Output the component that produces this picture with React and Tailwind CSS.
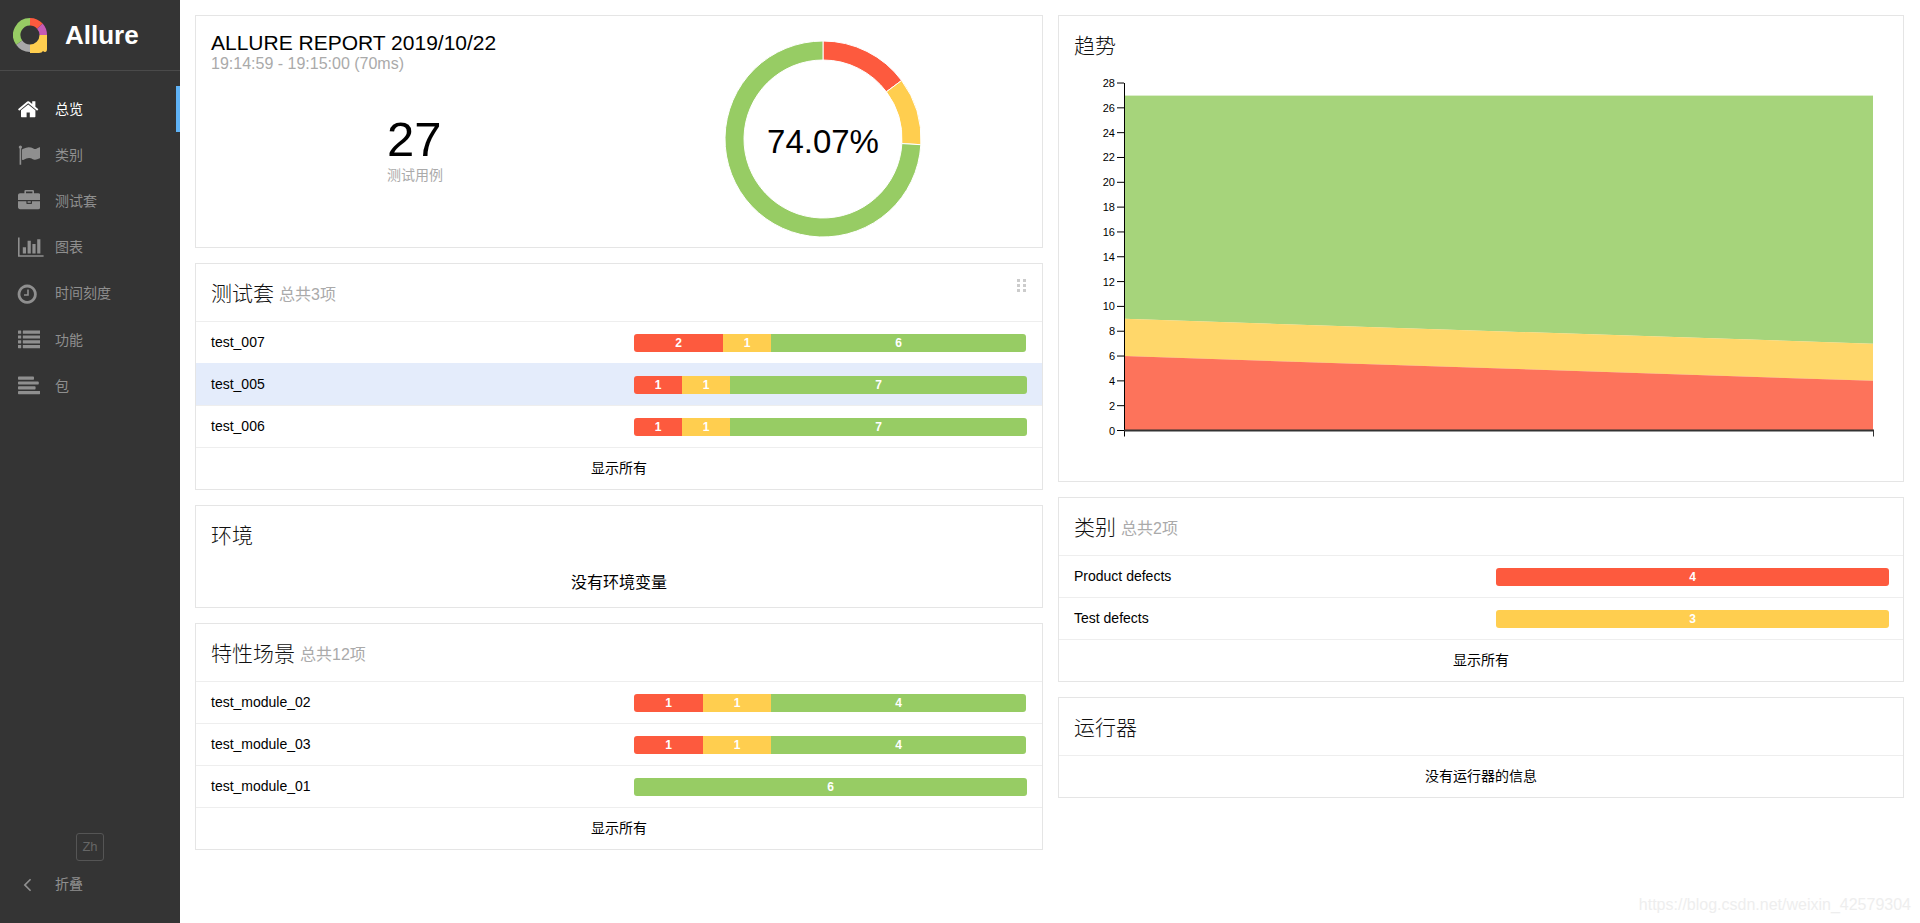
import React from "react";

const RED = "#fd5a3e";
const YELLOW = "#ffce4f";
const GREEN = "#97cc64";

// sidebar glyphs, 80 units to the pixel
const glyphs = {
  home: [1792, "M1472 992v480q0 26-19 45t-45 19h-384v-384h-256v384h-384q-26 0-45-19t-19-45v-480q0-1 .5-3t.5-3l575-474 575 474q1 2 1 6zm223-69l-62 74q-8 9-21 11h-3q-13 0-21-7l-692-577-692 577q-12 8-24 7-13-2-21-11l-62-74q-8-10-7-23.5t11-21.5l719-599q32-26 76-26t76 26l244 204v-195q0-14 9-23t23-9h192q14 0 23 9t9 23v408l219 182q10 8 11 21.5t-7 23.5z"],
  flag: [1792, "M320 256q0 72-64 109v1267q0 13-9.5 22.5t-22.5 9.5h-64q-13 0-22.5-9.5t-9.5-22.5v-1267q-64-37-64-109 0-53 37.5-90.5t90.5-37.5 90.5 37.5 37.5 90.5zm1472 64v763q0 25-12.5 38.5t-39.5 27.5q-215 116-369 116-61 0-123.5-22t-108.5-48-115.5-48-142.5-22q-192 0-464 146-17 9-33 9-26 0-45-19t-19-45v-742q0-32 31-55 21-14 79-43 236-120 421-120 107 0 200 29t219 88q38 19 88 19 54 0 117.5-21t110-47 88-47 54.5-21q26 0 45 19t19 45z"],
  briefcase: [1792, "M640 256h512v-128h-512v128zm1152 640v480q0 66-47 113t-113 47h-1472q-66 0-113-47t-47-113v-480h672v160q0 26 19 45t45 19h320q26 0 45-19t19-45v-160h672zm-768 0v128h-256v-128h256zm768-480v384h-1792v-384q0-66 47-113t113-47h352v-160q0-40 28-68t68-28h576q40 0 68 28t28 68v160h352q66 0 113 47t47 113z"],
  chart: [2048, "M640 896v512h-256v-512h256zm384-512v1024h-256v-1024h256zm1024 1152v128h-2048v-1536h128v1408h1920zm-640-896v768h-256v-768h256zm384-384v1152h-256v-1152h256z"],
  clock: [1792, "M1024 544v448q0 14-9 23t-23 9h-320q-14 0-23-9t-9-23v-64q0-14 9-23t23-9h224v-352q0-14 9-23t23-9h64q14 0 23 9t9 23zm416 352q0-148-73-273t-198-198-273-73-273 73-198 198-73 273 73 273 198 198 273 73 273-73 198-198 73-273zm224 0q0 209-103 385.5t-279.5 279.5-385.5 103-385.5-103-279.5-279.5-103-385.5 103-385.5 279.5-279.5 385.5-103 385.5 103 279.5 279.5 103 385.5z"],
  list: [1792, "M256 1312v192q0 14-9 23t-23 9h-192q-14 0-23-9t-9-23v-192q0-14 9-23t23-9h192q14 0 23 9t9 23zm0-384v192q0 14-9 23t-23 9h-192q-14 0-23-9t-9-23v-192q0-14 9-23t23-9h192q14 0 23 9t9 23zm0-384v192q0 14-9 23t-23 9h-192q-14 0-23-9t-9-23v-192q0-14 9-23t23-9h192q14 0 23 9t9 23zm1536 768v192q0 14-9 23t-23 9h-1344q-14 0-23-9t-9-23v-192q0-14 9-23t23-9h1344q14 0 23 9t9 23zm-1536-1152v192q0 14-9 23t-23 9h-192q-14 0-23-9t-9-23v-192q0-14 9-23t23-9h192q14 0 23 9t9 23zm1536 768v192q0 14-9 23t-23 9h-1344q-14 0-23-9t-9-23v-192q0-14 9-23t23-9h1344q14 0 23 9t9 23zm0-384v192q0 14-9 23t-23 9h-1344q-14 0-23-9t-9-23v-192q0-14 9-23t23-9h1344q14 0 23 9t9 23zm0-384v192q0 14-9 23t-23 9h-1344q-14 0-23-9t-9-23v-192q0-14 9-23t23-9h1344q14 0 23 9t9 23z"],
  align: [1792, "M1792 1344v128q0 26-19 45t-45 19h-1664q-26 0-45-19t-19-45v-128q0-26 19-45t45-19h1664q26 0 45 19t19 45zm-384-384v128q0 26-19 45t-45 19h-1280q-26 0-45-19t-19-45v-128q0-26 19-45t45-19h1280q26 0 45 19t19 45zm256-384v128q0 26-19 45t-45 19h-1536q-26 0-45-19t-19-45v-128q0-26 19-45t45-19h1536q26 0 45 19t19 45zm-384-384v128q0 26-19 45t-45 19h-1152q-26 0-45-19t-19-45v-128q0-26 19-45t45-19h1152q26 0 45 19t19 45z"],
  angle: [1792, "M1203 544q0 13-10 23l-393 393 393 393q10 10 10 23t-10 23l-50 50q-10 10-23 10t-23-10l-466-466q-10-10-10-23t10-23l466-466q10-10 23-10t23 10l50 50q10 10 10 23z"],
};

const Glyph = ({ name, className = "" }) => {
  const [w, d] = glyphs[name];
  return (
    <svg width={w / 80} height={22.4} viewBox={`0 0 ${w} 1792`} fill="currentColor" className={className}>
      <path d={d} />
    </svg>
  );
};

const navItems = [
  { label: "总览", icon: "home", iconClass: "-ml-[1px]", active: true },
  { label: "类别", icon: "flag" },
  { label: "测试套", icon: "briefcase" },
  { label: "图表", icon: "chart" },
  { label: "时间刻度", icon: "clock", iconClass: "-ml-[2px]" },
  { label: "功能", icon: "list" },
  { label: "包", icon: "align" },
];

const suites = [
  { name: "test_007", segs: [[RED, 2, 89], [YELLOW, 1, 48], [GREEN, 6, 255]] },
  { name: "test_005", segs: [[RED, 1, 48], [YELLOW, 1, 48], [GREEN, 7, 297]], active: true },
  { name: "test_006", segs: [[RED, 1, 48], [YELLOW, 1, 48], [GREEN, 7, 297]] },
];

const features = [
  { name: "test_module_02", segs: [[RED, 1, 69], [YELLOW, 1, 68], [GREEN, 4, 255]] },
  { name: "test_module_03", segs: [[RED, 1, 69], [YELLOW, 1, 68], [GREEN, 4, 255]] },
  { name: "test_module_01", segs: [[GREEN, 6, 393]] },
];

const categories = [
  { name: "Product defects", segs: [[RED, 4, 393]], narrow: true },
  { name: "Test defects", segs: [[YELLOW, 3, 393]], narrow: true },
];

const Logo = () => {
  const arc = (from, to, color) => {
    const p = (deg) => {
      const a = ((deg - 90) * Math.PI) / 180;
      return `${17 + 13.25 * Math.cos(a)} ${17 + 13.25 * Math.sin(a)}`;
    };
    return (
      <path
        d={`M${p(from)}A13.25 13.25 0 ${to - from > 180 ? 1 : 0} 1 ${p(to)}`}
        stroke={color}
        strokeWidth="7.5"
        fill="none"
      />
    );
  };
  return (
    <svg width="34" height="35" viewBox="0 0 34 35" className="shrink-0">
      {arc(0, 48, RED)}
      {arc(48, 90, "#c65bb5")}
      {arc(180, 235, "#a8a8a8")}
      {arc(235, 360, GREEN)}
      <path d="M26.5 17H34V31q0 3-2 3-1 0-2-1-1 2-4 2H17V26.5A9.5 9.5 0 0 0 26.5 17Z" fill={YELLOW} />
    </svg>
  );
};

const Sidebar = () => (
  <aside className="w-[180px] shrink-0 h-[923px] bg-[#343434] flex flex-col">
    <div className="h-[71px] flex items-center pl-[13px] border-b border-[#4a4a4a]">
      <Logo />
      <span className="ml-[18px] text-[26px] font-bold text-white">Allure</span>
    </div>
    <nav className="pt-[15px]">
      {navItems.map(({ label, icon, iconClass, active }) => (
        <div
          key={label}
          className={`h-[46.2px] flex items-center pl-[18px] border-r-4 ${
            active ? "text-white border-[#5fb2f5]" : "text-[#8f8f8f] border-transparent"
          }`}
        >
          <span className="w-[37px] flex items-center">
            <Glyph name={icon} className={iconClass} />
          </span>
          <span className="text-[14px]">{label}</span>
        </div>
      ))}
    </nav>
    <div className="mt-auto pb-[27px]">
      <div className="ml-[76px] w-[28px] h-[28px] border border-[#555] rounded-[3px] flex items-center justify-center text-[13px] text-[#666]">
        Zh
      </div>
      <div className="mt-[11px] h-[24px] flex items-center pl-[16px] text-[#8f8f8f]">
        <span className="w-[39px] flex items-center">
          <Glyph name="angle" />
        </span>
        <span className="text-[14px]">折叠</span>
      </div>
    </div>
  </aside>
);

const CardHeader = ({ title, count }) => (
  <div className="h-[57px] flex items-center px-[15px] pt-[2px]">
    <h2 className="text-[21px] font-light text-[#111]">{title}</h2>
    {count && <span className="ml-[5px] mt-[2px] text-[16px] text-[#aaa]">{count}</span>}
  </div>
);

const StatusBar = ({ segs }) => (
  <div className="flex h-[18px] rounded-[3px] overflow-hidden text-[12px] font-bold text-white">
    {segs.map(([color, value, width], i) => (
      <div
        key={i}
        className="flex items-center justify-center"
        style={{ width, backgroundColor: color }}
      >
        {value}
      </div>
    ))}
  </div>
);

const Row = ({ item }) => (
  <div
    className={`h-[42px] flex items-center pl-[15px] text-[14px] text-black border-t ${
      item.active ? "bg-[#e4ecfb] border-[#e4ecfb]" : "border-[#eee]"
    }`}
  >
    <div className={item.narrow ? "w-[422px]" : "w-[423px]"}>{item.name}</div>
    <StatusBar segs={item.segs} />
  </div>
);

const ShowAll = () => (
  <div className="h-[42px] flex items-center justify-center text-[14px] text-black border-t border-[#eee]">
    显示所有
  </div>
);

const Card = ({ className = "", children }) => (
  <section className={`border border-[#e5e5e5] bg-white ${className}`}>{children}</section>
);

const Donut = () => {
  const R = 98;
  const r = 79;
  const pt = (radius, deg) => {
    const a = ((deg - 90) * Math.PI) / 180;
    return `${98 + radius * Math.cos(a)} ${98 + radius * Math.sin(a)}`;
  };
  const seg = (from, to) =>
    `M${pt(R, from)}A${R} ${R} 0 ${to - from > 180 ? 1 : 0} 1 ${pt(R, to)}L${pt(r, to)}A${r} ${r} 0 ${
      to - from > 180 ? 1 : 0
    } 0 ${pt(r, from)}Z`;
  const total = 27;
  const failed = (4 / total) * 360;
  const broken = failed + (3 / total) * 360;
  return (
    <svg width="196" height="196" viewBox="0 0 196 196" className="mt-[25px]">
      <path d={seg(0, failed)} fill={RED} stroke="#fff" strokeWidth="1" />
      <path d={seg(failed, broken)} fill={YELLOW} stroke="#fff" strokeWidth="1" />
      <path d={seg(broken, 360)} fill={GREEN} stroke="#fff" strokeWidth="1" />
      <text x="98" y="112" textAnchor="middle" fontSize="33" fill="#000">
        74.07%
      </text>
    </svg>
  );
};

const TrendChart = () => {
  // svg origin sits at 1074,73 on the page
  const x0 = 50;
  const x1 = 799;
  const y = (v) => 357.5 - v * 12.41;
  const ticks = Array.from({ length: 15 }, (_, i) => i * 2);
  return (
    <svg width="816" height="370" viewBox="0 0 816 370" className="ml-[15px]">
      <path d={`M${x0} ${y(27)}L${x1} ${y(27)}L${x1} ${y(7)}L${x0} ${y(9)}Z`} fill={GREEN} fillOpacity="0.85" />
      <path d={`M${x0} ${y(9)}L${x1} ${y(7)}L${x1} ${y(4)}L${x0} ${y(6)}Z`} fill="#ffd050" fillOpacity="0.85" />
      <path d={`M${x0} ${y(6)}L${x1} ${y(4)}L${x1} ${y(0)}L${x0} ${y(0)}Z`} fill={RED} fillOpacity="0.85" />
      <line x1={x0} x2={x1} y1={y(27)} y2={y(27)} stroke="#fff" strokeOpacity="0.25" />
      {ticks.map((t) => (
        <g key={t}>
          <line x1={x0 - 7} x2={x0} y1={y(t)} y2={y(t)} stroke="#000" />
          <text x={x0 - 9} y={y(t) + 4} textAnchor="end" fontSize="11" fill="#000">
            {t}
          </text>
        </g>
      ))}
      <line x1={x0 + 0.5} x2={x0 + 0.5} y1={y(28)} y2={y(0) + 6} stroke="#000" />
      <line x1={x0} x2={x1 + 1} y1={y(0)} y2={y(0)} stroke="#333" strokeWidth="2" />
      <line x1={x1 + 0.5} x2={x1 + 0.5} y1={y(0)} y2={y(0) + 6} stroke="#333" />
    </svg>
  );
};

const App = () => (
  <div className="relative flex w-[1920px] h-[923px] overflow-hidden bg-white [font-family:'Liberation_Sans','Noto_Sans_CJK_SC',sans-serif]">
    <Sidebar />
    <main className="flex-1 flex gap-[15px] pl-[15px] pt-[15px]">
      <div className="w-[848px] flex flex-col gap-[15px]">
        {/* Summary */}
        <Card className="h-[233px] flex">
          <div className="w-[408px] pl-[15px]">
            <div className="pt-[16px] text-[21px] leading-[22px] text-black">ALLURE REPORT 2019/10/22</div>
            <div className="mt-[1px] text-[16px] leading-[18px] text-[#aaa]">19:14:59 - 19:15:00 (70ms)</div>
            <div className="ml-[176px] mt-[42px]">
              <div className="text-[49px] leading-[48px] text-black">27</div>
              <div className="mt-[3px] text-[14px] leading-[18px] text-[#aaa]">测试用例</div>
            </div>
          </div>
          <div className="flex-1 flex justify-center">
            <Donut />
          </div>
        </Card>

        {/* Suites */}
        <Card className="relative">
          <CardHeader title="测试套" count="总共3项" />
          <svg width="9" height="13" viewBox="0 0 9 13" className="absolute right-[16px] top-[15px]" fill="#ccc">
            <rect x="0" y="0" width="3" height="3" />
            <rect x="6" y="0" width="3" height="3" />
            <rect x="0" y="5" width="3" height="3" />
            <rect x="6" y="5" width="3" height="3" />
            <rect x="0" y="10" width="3" height="3" />
            <rect x="6" y="10" width="3" height="3" />
          </svg>
          {suites.map((s) => (
            <Row key={s.name} item={s} />
          ))}
          <ShowAll />
        </Card>

        {/* Environment */}
        <Card className="h-[103px]">
          <CardHeader title="环境" />
          <div className="text-center text-[16px] leading-[24px] mt-[8px] text-black">没有环境变量</div>
        </Card>

        {/* Features */}
        <Card>
          <CardHeader title="特性场景" count="总共12项" />
          {features.map((f) => (
            <Row key={f.name} item={f} />
          ))}
          <ShowAll />
        </Card>
      </div>

      <div className="w-[846px] flex flex-col gap-[15px]">
        {/* Trend */}
        <Card className="h-[467px]">
          <CardHeader title="趋势" />
          <TrendChart />
        </Card>

        {/* Categories */}
        <Card>
          <CardHeader title="类别" count="总共2项" />
          {categories.map((c) => (
            <Row key={c.name} item={c} />
          ))}
          <ShowAll />
        </Card>

        {/* Executors */}
        <Card>
          <CardHeader title="运行器" />
          <div className="h-[42px] flex items-center justify-center text-[14px] text-black border-t border-[#eee]">
            没有运行器的信息
          </div>
        </Card>
      </div>
    </main>
    <div className="absolute right-[9px] top-[896px] text-[16px] leading-[18px] text-[#eeeeee]">
      https://blog.csdn.net/weixin_42579304
    </div>
  </div>
);

export default App;
